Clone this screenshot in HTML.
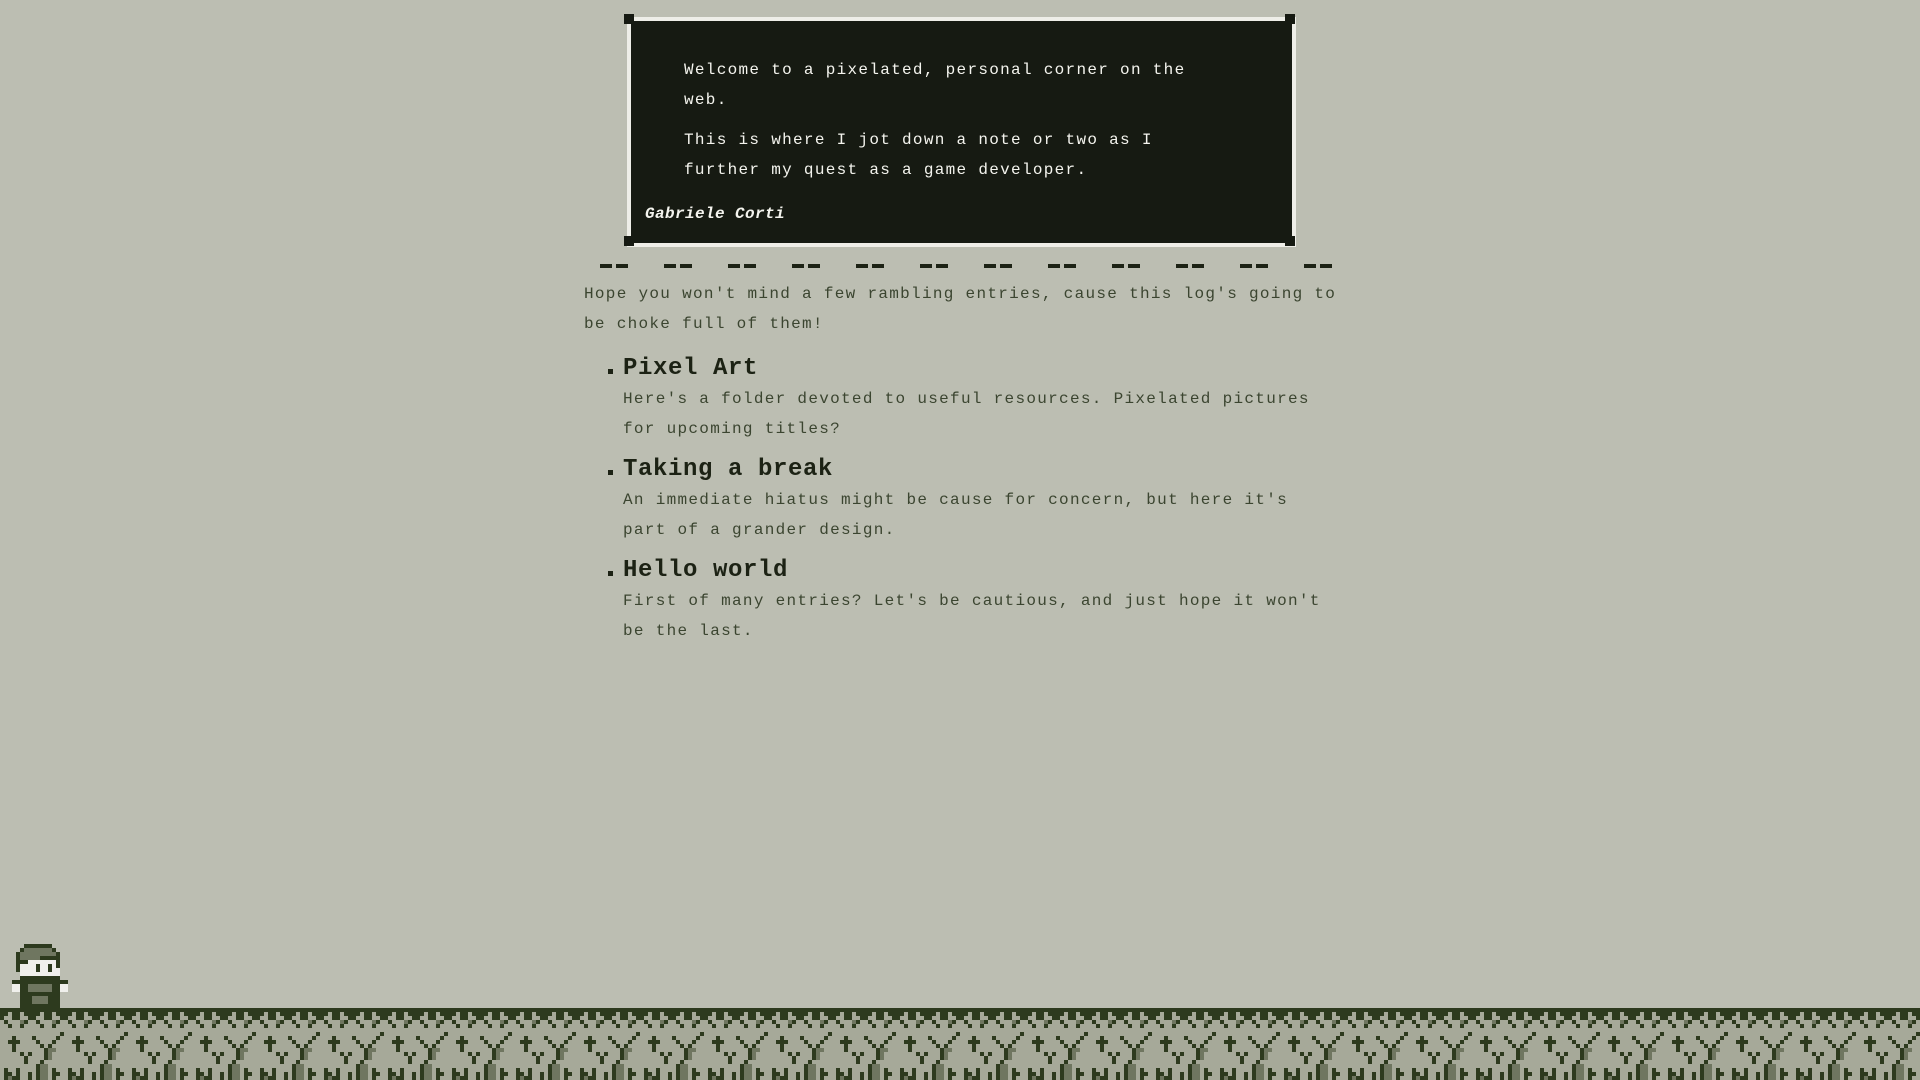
<!DOCTYPE html>
<html><head><meta charset="utf-8"><style>
html,body{margin:0;padding:0;}
body{width:1920px;height:1080px;overflow:hidden;background:#bcbeb2;position:relative;font-family:"Liberation Mono",monospace;}
.t{position:absolute;white-space:nowrap;font-size:16px;letter-spacing:1.3px;line-height:30px;}
.box{position:absolute;left:627px;top:17px;width:661px;height:222px;background:#161a12;border:4px solid #eeeee8;}
.c{position:absolute;width:10px;height:10px;background:#161a12;}
.w{color:#f4f4ee;}
.d{color:#3b4530;}
.h{position:absolute;font-size:24px;font-weight:bold;color:#1c2214;letter-spacing:0.6px;line-height:30px;white-space:nowrap;}
.b{position:absolute;width:5px;height:5px;background:#1c2214;left:608px;}
</style></head><body>
<div class="box"></div>
<div class="c" style="left:624px;top:14px"></div>
<div class="c" style="left:1285px;top:14px"></div>
<div class="c" style="left:624px;top:236px"></div>
<div class="c" style="left:1285px;top:236px"></div>
<div class="t w" style="left:684px;top:55px">Welcome to a pixelated, personal corner on the</div>
<div class="t w" style="left:684px;top:85px">web.</div>
<div class="t w" style="left:684px;top:125px">This is where I jot down a note or two as I</div>
<div class="t w" style="left:684px;top:155px">further my quest as a game developer.</div>
<div class="t w" style="left:645px;top:199px;font-style:italic;font-weight:bold;letter-spacing:0.4px">Gabriele Corti</div>
<div class="t d" style="left:584px;top:279px">Hope you won't mind a few rambling entries, cause this log's going to</div>
<div class="t d" style="left:584px;top:309px">be choke full of them!</div>
<div class="b" style="top:369px"></div>
<div class="h" style="left:623px;top:354px">Pixel Art</div>
<div class="t d" style="left:623px;top:384px">Here's a folder devoted to useful resources. Pixelated pictures</div>
<div class="t d" style="left:623px;top:414px">for upcoming titles?</div>
<div class="b" style="top:470px"></div>
<div class="h" style="left:623px;top:455px">Taking a break</div>
<div class="t d" style="left:623px;top:485px">An immediate hiatus might be cause for concern, but here it's</div>
<div class="t d" style="left:623px;top:515px">part of a grander design.</div>
<div class="b" style="top:571px"></div>
<div class="h" style="left:623px;top:556px">Hello world</div>
<div class="t d" style="left:623px;top:586px">First of many entries? Let's be cautious, and just hope it won't</div>
<div class="t d" style="left:623px;top:616px">be the last.</div>
<svg style="position:absolute;left:600px;top:262px" width="740" height="8">
<defs><pattern id="dp" width="64" height="8" patternUnits="userSpaceOnUse">
<rect x="0" y="2" width="12" height="4" fill="#1c2214"/><rect x="16" y="2" width="12" height="4" fill="#1c2214"/></pattern></defs>
<rect width="740" height="8" fill="url(#dp)"/></svg>
<svg style="position:absolute;left:0;top:1008px" width="1920" height="72" shape-rendering="crispEdges">
<defs>
<pattern id="z" width="32" height="24" patternUnits="userSpaceOnUse">
<g fill="#2d3a1e">
<rect x="0" y="0" width="32" height="4"/>
<rect x="0" y="4" width="8" height="4"/><rect x="12" y="4" width="8" height="4"/><rect x="24" y="4" width="8" height="4"/>
<rect x="0" y="8" width="4" height="4"/><rect x="12" y="8" width="4" height="4"/><rect x="16" y="8" width="4" height="4"/><rect x="28" y="8" width="4" height="4"/>
<rect x="4" y="12" width="4" height="4"/><rect x="24" y="12" width="4" height="4"/>
<rect x="8" y="16" width="4" height="4"/><rect x="20" y="16" width="4" height="4"/>
</g>
<rect x="20" y="12" width="4" height="4" fill="#6f7660"/>
</pattern>
<pattern id="s" width="64" height="72" patternUnits="userSpaceOnUse">
<g fill="#2d3a1e">
<rect x="12" y="28" width="4" height="16"/><rect x="8" y="32" width="12" height="4"/>
<rect x="32" y="28" width="4" height="4"/><rect x="36" y="32" width="4" height="4"/><rect x="40" y="36" width="4" height="4"/><rect x="44" y="40" width="4" height="12"/>
<rect x="60" y="24" width="4" height="4"/><rect x="56" y="28" width="4" height="4"/><rect x="52" y="32" width="4" height="4"/><rect x="48" y="36" width="4" height="4"/>
<rect x="20" y="44" width="4" height="4"/><rect x="28" y="44" width="4" height="4"/><rect x="24" y="48" width="4" height="8"/>
<rect x="4" y="60" width="4" height="12"/><rect x="8" y="64" width="4" height="4"/><rect x="16" y="60" width="4" height="12"/><rect x="12" y="68" width="4" height="4"/>
<rect x="36" y="56" width="4" height="16"/><rect x="40" y="52" width="4" height="4"/><rect x="52" y="60" width="4" height="12"/><rect x="56" y="64" width="4" height="4"/><rect x="28" y="64" width="4" height="8"/>
</g>
<g fill="#6f7660"><rect x="48" y="40" width="8" height="4"/><rect x="48" y="44" width="4" height="8"/><rect x="40" y="56" width="8" height="16"/><rect x="8" y="68" width="4" height="4"/></g>
</pattern></defs>
<rect width="1920" height="72" fill="#a6a999"/>
<rect width="1920" height="24" fill="url(#z)"/>
<rect width="1920" height="72" fill="url(#s)"/>
</svg>
<svg style="position:absolute;left:12px;top:944px" width="60" height="64" shape-rendering="crispEdges">
<g fill="#2d3a1e"><rect x="12" y="0" width="28" height="4"/><rect x="8" y="4" width="36" height="4"/><rect x="4" y="8" width="44" height="20"/><rect x="8" y="28" width="40" height="36"/><rect x="0" y="36" width="56" height="12"/></g>
<g fill="#6f7660"><rect x="12" y="4" width="28" height="4"/><rect x="8" y="8" width="36" height="8"/><rect x="16" y="40" width="24" height="8"/><rect x="20" y="52" width="16" height="8"/></g>
<g fill="#f0f0ec"><rect x="8" y="20" width="8" height="12"/><rect x="16" y="16" width="32" height="16"/><rect x="0" y="40" width="8" height="8"/><rect x="48" y="40" width="8" height="8"/></g>
<g fill="#2d3a1e"><rect x="24" y="20" width="4" height="8"/><rect x="36" y="20" width="4" height="8"/><rect x="28" y="12" width="16" height="4"/><rect x="44" y="16" width="4" height="8"/></g>
</svg>
</body></html>
